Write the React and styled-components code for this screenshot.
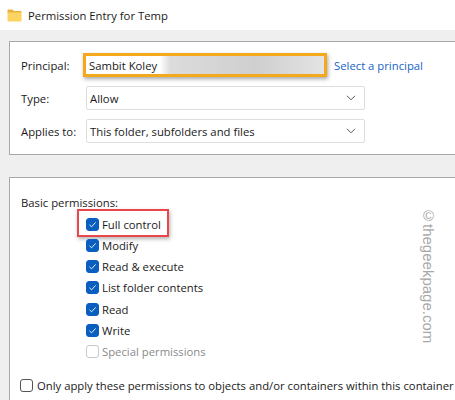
import React from 'react'
import styled, { createGlobalStyle } from 'styled-components'

const Global = createGlobalStyle`
  html, body { margin: 0; padding: 0; }
  body {
    width: 455px;
    height: 400px;
    overflow: hidden;
    background: #f0f0f0;
    font-family: "Open Sans", "Noto Sans", sans-serif;
    font-size: 11.3px;
    color: #1a1a1a;
  }
`

const Window = styled.div`
  width: 455px;
  height: 400px;
  display: flex;
  flex-direction: column;
  background: #efefef;
  position: relative;
`

const TitleBar = styled.div`
  height: 30px;
  background: #fff;
  display: flex;
  align-items: center;
  gap: 6px;
  padding-left: 7px;
`

const Body = styled.div`
  flex: 1;
  display: flex;
  flex-direction: column;
  padding: 11px 0 0 9px;
`

const Panel = styled.div`
  background: #fff;
  border-top: 1px solid #a9a9a9;
  border-left: 1px solid #a9a9a9;
  border-bottom: ${p => (p.$open ? 'none' : '1px solid #a9a9a9')};
  flex: ${p => (p.$open ? 1 : 'none')};
  height: ${p => p.$h || 'auto'};
  margin-bottom: ${p => p.$gap || '0'};
  box-sizing: border-box;
`

const FieldGrid = styled.div`
  display: grid;
  grid-template-columns: 65px 280px auto;
  row-gap: 9px;
  align-items: center;
  padding: 11px 0 0 11px;
`

const Label = styled.span`
  white-space: nowrap;
`

const PrincipalBox = styled.div`
  margin-left: -3px;
  width: 244px;
  height: 24px;
  box-sizing: border-box;
  border: 3px solid #f4a81b;
  box-shadow: 1px 2px 4px rgba(0, 0, 0, 0.35);
  background: linear-gradient(90deg, #fff 0 74px, #dcdcdc 84px, #cfcfcf 170px, #e4e4e4 240px);
  display: flex;
  align-items: center;
  padding-left: 3px;
`

const Link = styled.span`
  color: #1565c8;
  margin-left: -32px;
  white-space: nowrap;
`

const Select = styled.div`
  width: 279px;
  height: 24px;
  box-sizing: border-box;
  border: 1px solid #dedede;
  border-radius: 2px;
  display: flex;
  align-items: center;
  justify-content: space-between;
  padding: 0 8px 0 3px;
`

const SectionTitle = styled.div`
  padding: 17px 0 0 11px;
`

const PermList = styled.div`
  display: flex;
  flex-direction: column;
  gap: 5.3px;
  padding: 6px 0 0 76px;
`

const Row = styled.label`
  display: flex;
  align-items: center;
  gap: 3px;
  height: 16px;
  width: fit-content;
  white-space: nowrap;
  color: ${p => (p.$disabled ? '#8a8a8a' : '#1a1a1a')};
  position: relative;
`

const Highlight = styled.span`
  position: absolute;
  left: -9px;
  top: -7px;
  width: 88px;
  height: 24px;
  border: 2px solid #e8484a;
  box-shadow: 1px 2px 4px rgba(0, 0, 0, 0.3);
  pointer-events: none;
`

const Box = styled.span`
  width: 13px;
  height: 13px;
  box-sizing: border-box;
  border-radius: 3px;
  flex: none;
  display: flex;
  align-items: center;
  justify-content: center;
  background: ${p => (p.$checked ? '#0a5ec0' : '#fff')};
  border: 1px solid ${p => (p.$checked ? '#0a5ec0' : p.$disabled ? '#c8c8c8' : '#555')};
`

const BottomRow = styled(Row)`
  margin: 18px 0 0 10px;
  gap: 4px;
`

const Watermark = styled.div`
  position: absolute;
  left: 420px;
  top: 207px;
  writing-mode: vertical-rl;
  font-family: "Liberation Sans", Arial, sans-serif;
  font-size: 15px;
  color: #a8a8a8;
`

const Check = ({ checked, disabled }) => (
  <Box $checked={checked} $disabled={disabled}>
    {checked && (
      <svg width="9" height="9" viewBox="0 0 9 9">
        <path d="M1.5 4.8 L3.6 6.8 L7.6 2.4" fill="none" stroke="#fff" strokeWidth="0.9" />
      </svg>
    )}
  </Box>
)

const Chevron = () => (
  <svg width="10" height="6" viewBox="0 0 10 6">
    <path d="M1 0.8 L5 4.8 L9 0.8" fill="none" stroke="#555" strokeWidth="1" />
  </svg>
)

const FolderIcon = () => (
  <svg width="15" height="13" viewBox="0 0 15 13">
    <path d="M0.5 1.5 Q0.5 0.5 1.5 0.5 H5.5 L7 2 H13.5 Q14.5 2 14.5 3 V4 H0.5 Z" fill="#e8b23a" />
    <path d="M0.5 3.5 H14.5 V11.5 Q14.5 12.5 13.5 12.5 H1.5 Q0.5 12.5 0.5 11.5 Z" fill="#fcd462" />
  </svg>
)

const perms = [
  { name: 'Full control', checked: true, mark: true },
  { name: 'Modify', checked: true },
  { name: 'Read & execute', checked: true },
  { name: 'List folder contents', checked: true },
  { name: 'Read', checked: true },
  { name: 'Write', checked: true },
  { name: 'Special permissions', checked: false, disabled: true }
]

export default function App() {
  return (
    <Window>
      <Global />
      <TitleBar>
        <FolderIcon />
        <span>Permission Entry for Temp</span>
      </TitleBar>
      <Body>
        <Panel $h="114px" $gap="22px">
          <FieldGrid>
            <Label>Principal:</Label>
            <PrincipalBox>Sambit Koley</PrincipalBox>
            <Link>Select a principal</Link>
            <Label>Type:</Label>
            <Select>
              <span>Allow</span>
              <Chevron />
            </Select>
            <span />
            <Label>Applies to:</Label>
            <Select>
              <span>This folder, subfolders and files</span>
              <Chevron />
            </Select>
            <span />
          </FieldGrid>
        </Panel>
        <Panel $open>
          <SectionTitle>Basic permissions:</SectionTitle>
          <PermList>
            {perms.map(p => (
              <Row key={p.name} $disabled={p.disabled}>
                {p.mark && <Highlight />}
                <Check checked={p.checked} disabled={p.disabled} />
                <span>{p.name}</span>
              </Row>
            ))}
          </PermList>
          <BottomRow>
            <Check />
            <span>Only apply these permissions to objects and/or containers within this container</span>
          </BottomRow>
        </Panel>
      </Body>
      <Watermark>©thegeekpage.com</Watermark>
    </Window>
  )
}
